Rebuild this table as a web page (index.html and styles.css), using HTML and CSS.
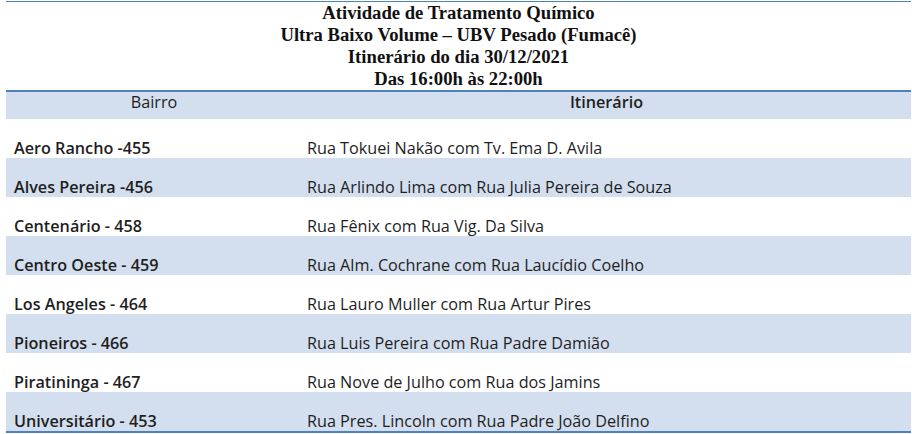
FILE: index.html
```html
<!DOCTYPE html>
<html lang="pt-BR">
<head>
<meta charset="utf-8">
<title>Itinerário UBV</title>
<link rel="stylesheet" href="styles.css">
</head>
<body>
<div class="doc">
  <div class="title">
    <div>Atividade de Tratamento Químico</div>
    <div>Ultra Baixo Volume – UBV Pesado (Fumacê)</div>
    <div>Itinerário do dia 30/12/2021</div>
    <div>Das 16:00h às 22:00h</div>
  </div>
  <table class="grid">
    <thead>
      <tr class="head">
        <th class="c1 plain">Bairro</th>
        <th class="c2">Itinerário</th>
      </tr>
    </thead>
    <tbody>
      <tr><td class="c1">Aero Rancho -455</td><td class="c2">Rua Tokuei Nakão com Tv. Ema D. Avila</td></tr>
      <tr class="band"><td class="c1">Alves Pereira -456</td><td class="c2">Rua Arlindo Lima com Rua Julia Pereira de Souza</td></tr>
      <tr><td class="c1">Centenário - 458</td><td class="c2">Rua Fênix com Rua Vig. Da Silva</td></tr>
      <tr class="band"><td class="c1">Centro Oeste - 459</td><td class="c2">Rua Alm. Cochrane com Rua Laucídio Coelho</td></tr>
      <tr><td class="c1">Los Angeles - 464</td><td class="c2">Rua Lauro Muller com Rua Artur Pires</td></tr>
      <tr class="band"><td class="c1">Pioneiros - 466</td><td class="c2">Rua Luis Pereira com Rua Padre Damião</td></tr>
      <tr><td class="c1">Piratininga - 467</td><td class="c2">Rua Nove de Julho com Rua dos Jamins</td></tr>
      <tr class="band"><td class="c1">Universitário - 453</td><td class="c2">Rua Pres. Lincoln com Rua Padre João Delfino</td></tr>
    </tbody>
  </table>
</div>
</body>
</html>
```
FILE: styles.css
```css
html, body {
  margin: 0;
  padding: 0;
  background: #ffffff;
}

.doc {
  margin: 1px 1px 0 6px;
  width: 905px;
  border-top: 1px solid #4f81bd;
}

.title {
  font-family: "Liberation Serif", "Times New Roman", serif;
  font-weight: bold;
  font-size: 18.67px;
  line-height: 22px;
  color: #111111;
  text-align: center;
}

.grid {
  width: 100%;
  border-collapse: collapse;
  font-family: "Open Sans", "Lato", sans-serif;
  font-size: 16.2px;
  color: #1e1e1e;
  border-top: 2px solid #4f81bd;
  border-bottom: 2px solid #4f81bd;
}

.grid th,
.grid td {
  padding: 0;
}

.head th {
  height: 26px;
  background: #d3dfee;
  vertical-align: top;
  text-align: center;
  font-weight: 600;
  line-height: 18px;
  padding-top: 1px;
}

.head th.plain {
  font-weight: normal;
}

.grid tbody td {
  height: 38px;
  vertical-align: bottom;
  line-height: 18px;
  padding-bottom: 1px;
}

.band td {
  background: #d3dfee;
}

.head th.c1 {
  width: 296px;
}

.grid tbody td.c1 {
  width: 288px;
  padding-left: 8px;
  font-weight: 600;
}

.grid tbody td.c2 {
  padding-left: 5px;
}
```
